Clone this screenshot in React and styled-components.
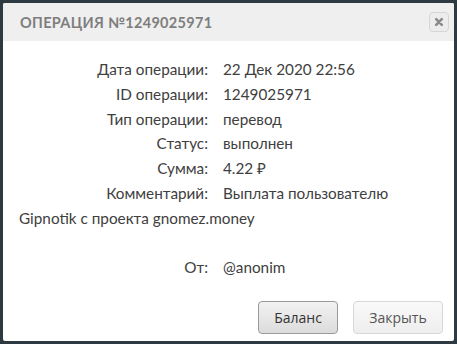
import React from "react";
import styled, { createGlobalStyle } from "styled-components";

const GlobalStyle = createGlobalStyle`
  html, body {
    margin: 0;
    padding: 0;
    background: #2d3a42;
  }
`;

const Frame = styled.div`
  box-sizing: border-box;
  width: 457px;
  height: 344px;
  padding: 3px;
`;

const Dialog = styled.div`
  box-sizing: border-box;
  height: 100%;
  background: #ffffff;
  display: flex;
  flex-direction: column;
  border-radius: 2px;
  overflow: hidden;
`;

const Header = styled.div`
  box-sizing: border-box;
  height: 38px;
  background: #efefef;
  display: flex;
  align-items: center;
  justify-content: space-between;
  padding: 0 5px 0 17px;
`;

const Title = styled.h2`
  margin: 0;
  font-family: Lato, "Open Sans", sans-serif;
  font-size: 14.5px;
  font-weight: 700;
  letter-spacing: 0.3px;
  color: #7e7e7e;
  text-transform: uppercase;
`;

const CloseButton = styled.button`
  box-sizing: border-box;
  width: 20px;
  height: 20px;
  padding: 0;
  border: 1px solid #d6d6d6;
  border-radius: 4px;
  background: #ececec;
  display: flex;
  align-items: center;
  justify-content: center;
  cursor: pointer;
`;

const Body = styled.div`
  padding: 16px 16px 0;
  font-family: Lato, "Open Sans", sans-serif;
  font-size: 15.3px;
  line-height: 24.8px;
  color: #404040;
`;

const Row = styled.div`
  margin-top: ${(p) => (p.$gap ? "24.8px" : "0")};
`;

const Label = styled.span`
  display: inline-block;
  width: 189px;
  margin-right: 15px;
  text-align: right;
`;

const Footer = styled.div`
  margin-top: auto;
  display: flex;
  justify-content: flex-end;
  gap: 15px;
  padding: 0 11px 7px;
`;

const Button = styled.button`
  box-sizing: border-box;
  height: 33px;
  width: ${(p) => p.$w}px;
  border-radius: 4px;
  font-family: "Open Sans", sans-serif;
  font-size: 14px;
  cursor: pointer;
  border: 1px solid ${(p) => (p.$primary ? "#9a9a9a" : "#d8d8d8")};
  color: ${(p) => (p.$primary ? "#333" : "#555")};
  background: ${(p) =>
    p.$primary
      ? "linear-gradient(#f2f2f2, #dcdcdc)"
      : "linear-gradient(#f9f9f9, #eeeeee)"};
`;

const rows = [
  ["Дата операции:", "22 Дек 2020 22:56"],
  ["ID операции:", "1249025971"],
  ["Тип операции:", "перевод"],
  ["Статус:", "выполнен"],
  ["Сумма:", "4.22 ₽"],
  ["Комментарий:", "Выплата пользователю Gipnotik с проекта gnomez.money"],
];

export default function App() {
  return (
    <>
      <GlobalStyle />
      <Frame>
        <Dialog>
          <Header>
            <Title>Операция №1249025971</Title>
            <CloseButton aria-label="close">
              <svg width="10" height="10" viewBox="0 0 10 10">
                <path
                  d="M2.2 2.2 L7.8 7.8 M7.8 2.2 L2.2 7.8"
                  stroke="#8a8a8a"
                  strokeWidth="2.6"
                  strokeLinecap="round"
                />
              </svg>
            </CloseButton>
          </Header>
          <Body>
            {rows.map(([l, v]) => (
              <Row key={l}>
                <Label>{l}</Label>
                {v}
              </Row>
            ))}
            <Row $gap>
              <Label>От:</Label>@anonim
            </Row>
          </Body>
          <Footer>
            <Button $primary $w={80}>
              Баланс
            </Button>
            <Button $w={90}>Закрыть</Button>
          </Footer>
        </Dialog>
      </Frame>
    </>
  );
}
